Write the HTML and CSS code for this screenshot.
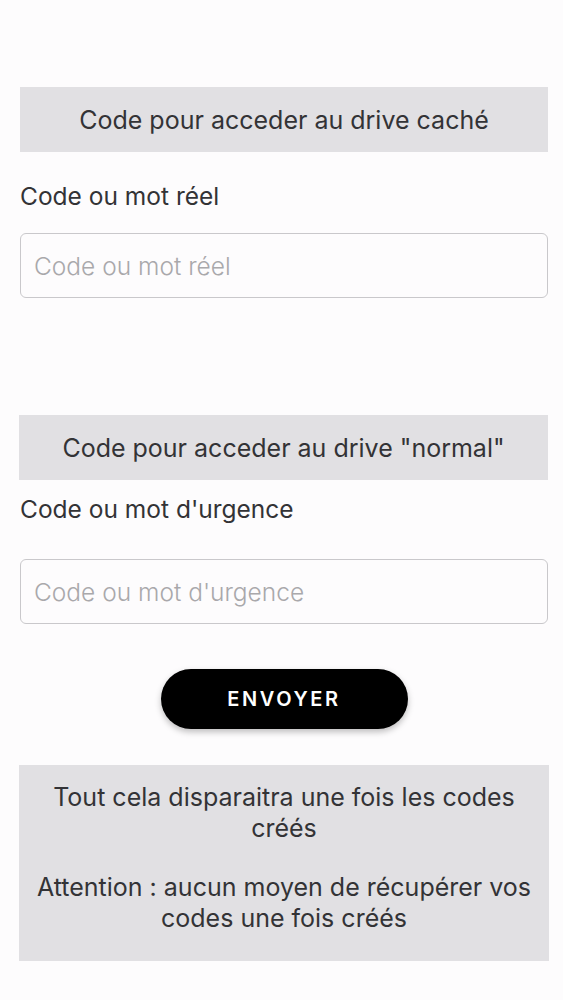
FILE: index.html
```html
<!DOCTYPE html>
<html lang="fr">
<head>
    <meta charset="UTF-8">
    <meta name="viewport" content="width=device-width, initial-scale=1.0">
    <title>Codes du drive</title>
    <link rel="stylesheet" href="styles.css">
</head>
<body>
    <div class="page">
        <!-- Hidden drive -->
        <div class="section-title section-title-first">Code pour acceder au drive caché</div>
        <label class="field-label field-label-first" for="real-code">Code ou mot réel</label>
        <input id="real-code" class="field-input" type="text" placeholder="Code ou mot réel">

        <!-- Normal drive -->
        <div class="section-title section-title-second">Code pour acceder au drive "normal"</div>
        <label class="field-label field-label-second" for="urgent-code">Code ou mot d'urgence</label>
        <input id="urgent-code" class="field-input field-input-second" type="text" placeholder="Code ou mot d'urgence">

        <div class="actions">
            <button class="send-button">ENVOYER</button>
        </div>

        <!-- Notice -->
        <div class="notice">
            <p>Tout cela disparaitra une fois les codes créés</p>
            <p>Attention : aucun moyen de récupérer vos codes une fois créés</p>
        </div>
    </div>
</body>
</html>
```

FILE: styles.css
```css
/* General Styles */
body, html {
    margin: 0;
    padding: 0;
    font-family: Inter, Roboto, "Liberation Sans", sans-serif;
    background-color: #fdfcfd;
    color: #333336;
}
.page {
    padding: 87px 15px 0 20px;
}

/* Section titles */
.section-title {
    background-color: #e1e0e3;
    height: 65px;
    display: flex;
    justify-content: center;
    align-items: center;
    font-size: 25px;
}
.section-title-second {
    margin-top: 117px;
    margin-left: -1px;
}

/* Fields */
.field-label {
    display: block;
    font-size: 24.5px;
    line-height: 30px;
    margin-top: 29px;
}
.field-label-second {
    margin-top: 14px;
}
.field-input {
    display: block;
    box-sizing: border-box;
    width: 528px;
    height: 65px;
    margin-top: 22px;
    padding: 0 13px;
    border: 1px solid #c9c8cb;
    border-radius: 6px;
    background: #fdfcfd;
    font-family: inherit;
    font-size: 24.5px;
    font-weight: 300;
    color: #333336;
}
.field-input-second {
    margin-top: 35px;
}
.field-input::placeholder {
    color: #a9a8ab;
}

/* Button */
.actions {
    display: flex;
    justify-content: center;
    margin-top: 45px;
}
.send-button {
    width: 247px;
    height: 60px;
    background-color: #000;
    color: #fff;
    border: none;
    border-radius: 30px;
    font-family: inherit;
    font-size: 20px;
    font-weight: 600;
    letter-spacing: 2.6px;
    box-shadow: 0 3px 6px rgba(0, 0, 0, 0.25);
    cursor: pointer;
}

/* Notice */
.notice {
    margin: 36px 0 0 -1px;
    width: 530px;
    box-sizing: border-box;
    padding: 17px 10px 27px;
    background-color: #e1e0e3;
    text-align: center;
    font-size: 25px;
    line-height: 31px;
}
.notice p {
    margin: 0;
}
.notice p + p {
    margin-top: 28px;
}
```
